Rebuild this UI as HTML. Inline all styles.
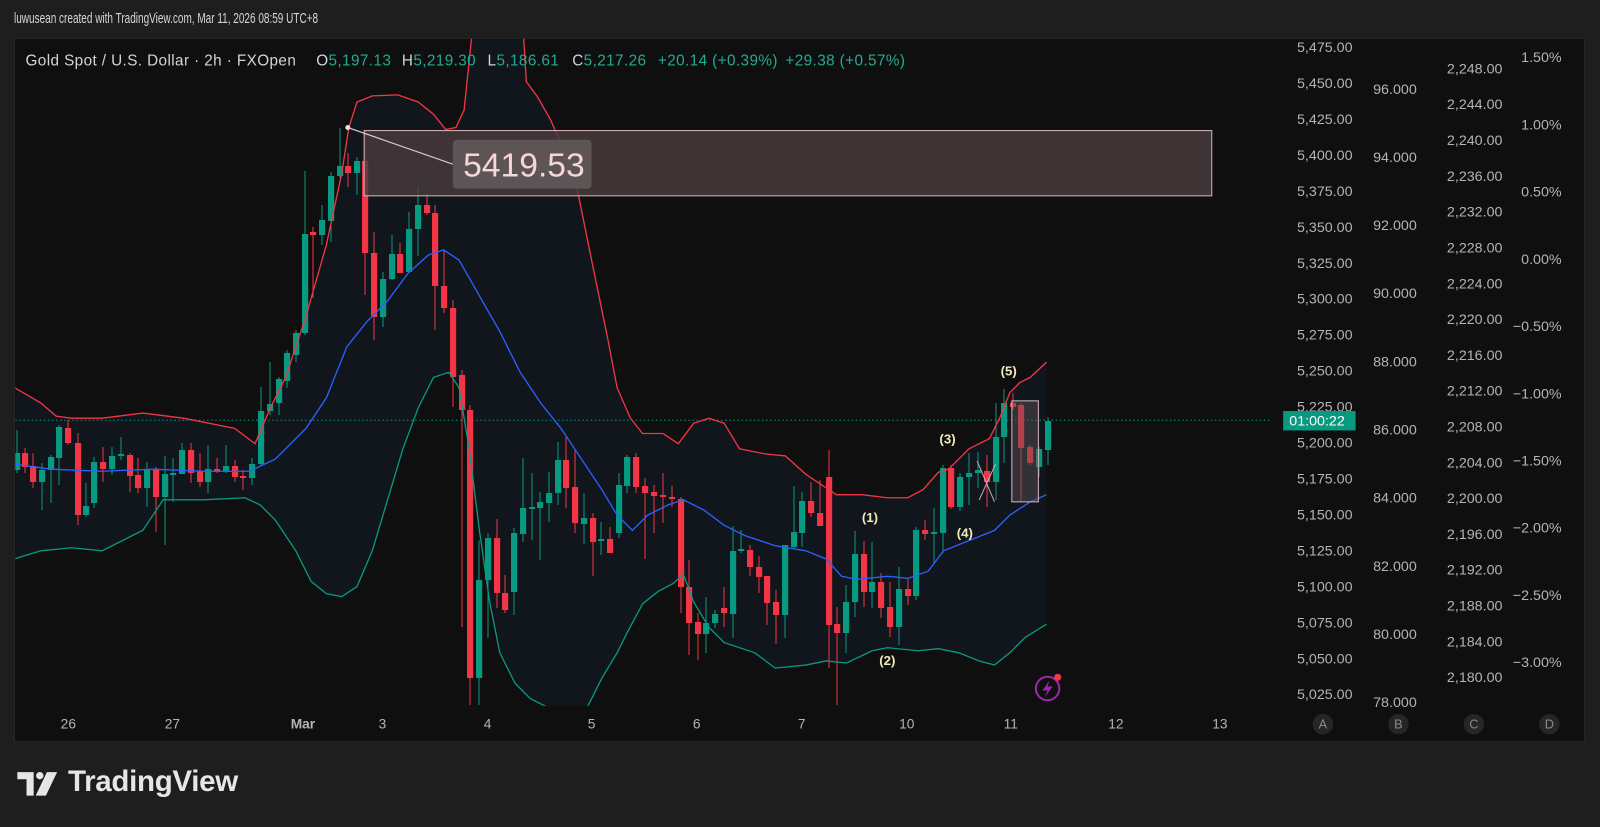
<!DOCTYPE html>
<html><head><meta charset="utf-8">
<style>
html,body{margin:0;padding:0;background:#1e1e1e;width:1600px;height:827px;overflow:hidden;font-family:"Liberation Sans",sans-serif;}
.hdr{position:absolute;left:14px;top:11px;font-size:14.5px;color:#d6d6d6;transform:scaleX(0.69);transform-origin:left;white-space:nowrap;}
.panel{position:absolute;left:14px;top:38px;width:1571px;height:704px;background:#0f0f0f;border:1px solid #262626;box-sizing:border-box;}
svg{position:absolute;left:0;top:0;}
.logo{position:absolute;left:68px;top:765px;font-size:29.5px;font-weight:bold;color:#e6e6e6;letter-spacing:-0.3px;}
</style></head><body>
<div class="hdr">luwusean created with TradingView.com, Mar 11, 2026 08:59 UTC+8</div>
<div class="panel"></div>
<svg id="s" width="1600" height="827" xmlns="http://www.w3.org/2000/svg" font-family="Liberation Sans, sans-serif">
<defs><clipPath id="cp"><rect x="15" y="38" width="1230" height="654"/></clipPath></defs>
<g transform="scale(1.02)">
<g clip-path="url(#cp)">
<polygon id="fill" fill="#11151c"/>
<line x1="15" y1="412" x2="1258" y2="412" stroke="#089981" stroke-width="1" stroke-dasharray="1.5,2.5"/>
<g id="candles" transform="scale(0.98039)"></g>
<polyline id="up" fill="none" stroke="#f23645" stroke-width="1.3"/>
<polyline id="mid" fill="none" stroke="#2962ff" stroke-width="1.3"/>
<polyline id="lo" fill="none" stroke="#089981" stroke-width="1.3"/>
<rect x="357" y="128" width="831" height="64" fill="#4a3c3e" fill-opacity="0.8" stroke="#d9b3bd" stroke-width="1"/>
<line x1="341" y1="125" x2="444" y2="161" stroke="#d9c4c9" stroke-width="1.2"/>
<circle cx="341" cy="125" r="2.5" fill="#e8dcdf"/>
<rect x="444" y="137" width="136" height="48" rx="4" fill="#5d5456"/>
<text x="454" y="173" font-size="33" fill="#f6d5dc">5419.53</text>
<rect x="992" y="393" width="26" height="99" fill="#5a5456" fill-opacity="0.45" stroke="#d9b3bd" stroke-width="1"/>
<line x1="958" y1="452" x2="975" y2="492" stroke="#c9aeb5" stroke-width="1"/>
<line x1="976" y1="455" x2="960" y2="490" stroke="#c9aeb5" stroke-width="1"/>
<g font-size="13" font-weight="bold" fill="#f2e9b8">
<text x="845" y="512">(1)</text><text x="862" y="652">(2)</text><text x="921" y="435">(3)</text><text x="938" y="527">(4)</text><text x="981" y="368">(5)</text>
</g>
<circle cx="1027" cy="675" r="11.5" fill="none" stroke="#9c27b0" stroke-width="2"/>
<path d="M1029 667 L1022 677 L1027 677 L1024 684 L1032 673 L1027 673 Z" fill="#9c27b0"/>
<circle cx="1037" cy="664" r="3.5" fill="#f23645"/>
</g>
<g font-size="15" fill="#d1d4dc" letter-spacing="0.4">
<text x="25" y="64">Gold Spot / U.S. Dollar · 2h · FXOpen</text>
<text x="310" y="64">O<tspan fill="#22ab94">5,197.13</tspan></text>
<text x="394" y="64">H<tspan fill="#22ab94">5,219.30</tspan></text>
<text x="478" y="64">L<tspan fill="#22ab94">5,186.61</tspan></text>
<text x="561" y="64">C<tspan fill="#22ab94">5,217.26</tspan></text>
<text x="645" y="64" fill="#22ab94">+20.14 (+0.39%)</text>
<text x="770" y="64" fill="#22ab94">+29.38 (+0.57%)</text>
</g>
<g id="axes" font-size="14" fill="#b4b4b4"></g>
<rect x="1258" y="403" width="71" height="19" fill="#089981"/>
<text x="1264" y="417" font-size="14" fill="#ffffff">01:00:22</text>
<g font-size="13.5" fill="#b4b4b4" text-anchor="middle">
<text x="67" y="714">26</text><text x="169" y="714">27</text><text x="297" y="714" font-weight="bold">Mar</text><text x="375" y="714">3</text><text x="478" y="714">4</text><text x="580" y="714">5</text><text x="683" y="714">6</text><text x="786" y="714">7</text><text x="889" y="714">10</text><text x="991" y="714">11</text><text x="1094" y="714">12</text><text x="1196" y="714">13</text>
</g>
<g fill="#262626"><circle cx="1297" cy="710" r="10"/><circle cx="1371" cy="710" r="10"/><circle cx="1445" cy="710" r="10"/><circle cx="1519" cy="710" r="10"/></g>
<g font-size="12.5" fill="#8a8a8a" text-anchor="middle"><text x="1297" y="714">A</text><text x="1371" y="714">B</text><text x="1445" y="714">C</text><text x="1519" y="714">D</text></g>
<g fill="#e6e6e6">
<path d="M17 757 H33 V780 H26 V764 H17 Z"/>
<circle cx="39" cy="760.5" r="3.6"/>
<path d="M46 757 H56 L45 780 H35 Z"/>
</g>
</g>
</svg>
<div class="logo">TradingView</div>
<script>
var NS="http://www.w3.org/2000/svg";
var C=[[17,453,470,430,473,'g'],[25,453,467,448,473,'r'],[33,466,482,453,488,'r'],[42,470,482,463,510,'g'],[51,457,470,455,503,'g'],[59,427,458,425,485,'g'],[68,428,443,420,445,'r'],[78,443,515,433,525,'r'],[86,506,515,483,517,'g'],[94,462,503,457,508,'g'],[103,462,469,447,482,'r'],[112,456,469,447,475,'g'],[121,454,456,437,460,'g'],[130,455,476,453,492,'r'],[138,475,488,458,493,'r'],[147,469,488,462,507,'g'],[156,469,497,467,532,'r'],[165,474,497,456,545,'g'],[173,473,475,458,502,'g'],[182,450,474,443,473,'g'],[191,450,473,443,483,'r'],[200,471,482,453,487,'r'],[208,469,482,445,493,'g'],[217,469,472,458,473,'r'],[226,466,472,445,473,'g'],[235,466,477,460,482,'r'],[243,476,478,470,490,'r'],[252,464,478,458,485,'g'],[261,411,464,387,465,'g'],[270,404,411,362,415,'g'],[279,379,403,377,415,'g'],[287,353,381,350,388,'g'],[296,333,355,330,362,'g'],
[305,234,333,171,335,'g'],[313,232,235,227,298,'r'],[322,220,235,205,245,'g'],[331,176,221,172,242,'g'],[340,166,176,128,178,'g'],[348,166,173,153,187,'r'],[357,161,173,157,195,'g'],[365,161,253,132,295,'r'],[374,253,317,232,340,'r'],[383,279,317,272,327,'g'],[392,254,279,235,280,'g'],[400,254,273,243,273,'r'],[409,229,272,212,272,'g'],[418,205,229,186,256,'g'],[427,205,213,193,215,'r'],[435,213,286,205,330,'r'],[444,286,308,250,313,'r'],[453,308,377,300,407,'r'],
[462,375,410,370,627,'r'],[470,410,678,405,705,'r'],[479,580,678,540,705,'g'],[488,538,580,533,638,'g'],[497,538,593,519,608,'r'],[505,593,610,575,613,'r'],[514,533,592,528,615,'g'],[523,508,534,458,542,'g'],[532,507,509,473,540,'g'],[540,502,508,492,560,'g'],[549,493,503,472,522,'g'],[558,460,493,442,505,'g'],[566,460,488,437,508,'r'],[575,487,523,450,533,'r'],[584,518,524,493,544,'g'],[593,518,542,513,576,'r'],[601,539,541,522,555,'g'],[610,539,553,527,553,'r'],[619,485,533,473,538,'g'],[627,457,486,455,493,'g'],[636,457,487,453,493,'r'],[645,486,493,478,559,'r'],[654,492,496,485,533,'r'],[663,495,497,473,523,'r'],[672,497,499,486,507,'r'],[681,499,587,497,613,'r'],[689,587,623,560,655,'r'],[698,622,634,613,660,'r'],[706,623,634,597,653,'g'],[715,614,623,610,628,'g'],[724,608,613,587,627,'r'],[733,551,614,526,638,'g'],[741,549,551,530,553,'g'],[750,550,567,545,576,'r'],[759,567,577,556,593,'r'],[767,576,603,576,625,'r'],[776,602,615,590,644,'r'],[785,545,615,545,638,'g'],[794,532,547,486,548,'g'],[802,501,533,492,547,'g'],[811,501,513,482,517,'r'],[820,513,526,480,526,'r'],
[829,477,625,450,668,'r'],[837,624,633,607,705,'r'],[846,602,633,585,653,'g'],[855,554,602,531,617,'g'],[864,554,592,541,607,'r'],[872,582,592,542,608,'g'],[881,582,608,573,618,'r'],[890,607,627,582,637,'r'],[899,589,627,567,645,'g'],[908,589,596,579,605,'r'],[916,530,596,527,600,'g'],[925,530,534,520,540,'r'],[934,532,534,508,564,'g'],[943,468,533,465,553,'g'],[951,468,507,465,509,'r'],[960,477,507,473,511,'g'],[969,473,477,453,505,'g'],[978,470,473,452,488,'g'],[987,471,482,455,507,'r'],[996,437,482,403,500,'g'],[1004,403,437,389,463,'g'],[1013,403,407,393,410,'r'],[1021,405,448,403,502,'r'],[1030,447,463,445,465,'r'],[1039,449,467,447,477,'g'],[1048,421,450,417,465,'g']];
var g=document.getElementById('candles');
C.forEach(function(c){var col=c[5]=='g'?'#089981':'#f23645';
var l=document.createElementNS(NS,'line');l.setAttribute('x1',c[0]);l.setAttribute('x2',c[0]);l.setAttribute('y1',c[3]);l.setAttribute('y2',c[4]);l.setAttribute('stroke',col);l.setAttribute('stroke-width','1');g.appendChild(l);
var r=document.createElementNS(NS,'rect');r.setAttribute('x',c[0]-3);r.setAttribute('y',c[1]);r.setAttribute('width',6.2);r.setAttribute('height',Math.max(1.5,c[2]-c[1]));r.setAttribute('fill',col);g.appendChild(r);});
var U=[[14,380],[40,395],[55,408],[70,410],[100,410],[140,405],[180,410],[230,420],[250,435],[265,400],[280,370],[300,310],[320,240],[335,170],[342,125],[350,100],[365,94],[390,93],[410,100],[425,112],[437,127],[447,125],[455,108],[462,40],[470,-20],[510,-20],[516,80],[527,95],[540,118],[552,145],[566,186],[580,255],[596,333],[605,380],[618,410],[630,425],[650,425],[665,435],[680,415],[695,410],[710,415],[725,440],[750,445],[770,447],[790,465],[805,475],[820,485],[845,485],[870,488],[890,488],[905,480],[920,463],[930,460],[950,440],[970,430],[980,410],[990,385],[1000,375],[1010,370],[1026,355]];
var M=[[14,455],[50,460],[100,462],[150,460],[200,462],[245,462],[270,450],[300,420],[320,390],[340,340],[360,315],[380,295],[400,268],[420,250],[435,245],[450,255],[470,290],[490,325],[510,365],[530,395],[550,420],[570,450],[590,480],[605,505],[620,520],[635,505],[655,495],[670,490],[690,500],[710,515],[730,525],[760,535],[790,540],[810,548],[825,565],[840,568],[870,565],[890,567],[910,560],[925,540],[950,530],[975,520],[990,505],[1010,492],[1026,485]];
var L=[[14,548],[40,540],[70,537],[100,540],[120,530],[140,520],[150,505],[160,490],[200,490],[240,488],[255,495],[270,510],[290,540],[305,570],[320,582],[335,585],[350,575],[365,540],[380,490],[395,440],[410,400],[425,370],[440,365],[450,380],[460,440],[470,520],[480,590],[490,640],[505,670],[520,685],[540,695],[575,695],[590,665],[605,640],[615,620],[630,592],[645,580],[660,572],[670,563],[680,590],[695,615],[710,630],[740,640],[760,655],[790,652],[810,648],[830,650],[855,638],[870,635],[900,638],[920,636],[940,640],[960,648],[975,652],[990,640],[1005,625],[1026,612]];
function s(a){return a.map(function(p){return p[0]+','+p[1]}).join(' ');}
document.getElementById('up').setAttribute('points',s(U));
document.getElementById('mid').setAttribute('points',s(M));
document.getElementById('lo').setAttribute('points',s(L));
document.getElementById('fill').setAttribute('points',s(U)+' '+s(L.slice().reverse()));
var ax=document.getElementById('axes');
function t(x,y,str,anchor){var e=document.createElementNS(NS,'text');e.setAttribute('x',x);e.setAttribute('y',y);if(anchor)e.setAttribute('text-anchor',anchor);e.textContent=str;ax.appendChild(e);}
var A=['5,475.00','5,450.00','5,425.00','5,400.00','5,375.00','5,350.00','5,325.00','5,300.00','5,275.00','5,250.00','5,225.00','5,200.00','5,175.00','5,150.00','5,125.00','5,100.00','5,075.00','5,050.00','5,025.00'];
A.forEach(function(v,i){t(1326,51+i*35.25,v,'end');});
var B=['96.000','94.000','92.000','90.000','88.000','86.000','84.000','82.000','80.000','78.000'];
B.forEach(function(v,i){t(1389,92+i*66.8,v,'end');});
var Cc=['2,248.00','2,244.00','2,240.00','2,236.00','2,232.00','2,228.00','2,224.00','2,220.00','2,216.00','2,212.00','2,208.00','2,204.00','2,200.00','2,196.00','2,192.00','2,188.00','2,184.00','2,180.00'];
Cc.forEach(function(v,i){t(1473,72+i*35.1,v,'end');});
var D=['1.50%','1.00%','0.50%','0.00%','\u22120.50%','\u22121.00%','\u22121.50%','\u22122.00%','\u22122.50%','\u22123.00%'];
D.forEach(function(v,i){t(1531,61+i*65.9,v,'end');});
</script>
</body></html>
